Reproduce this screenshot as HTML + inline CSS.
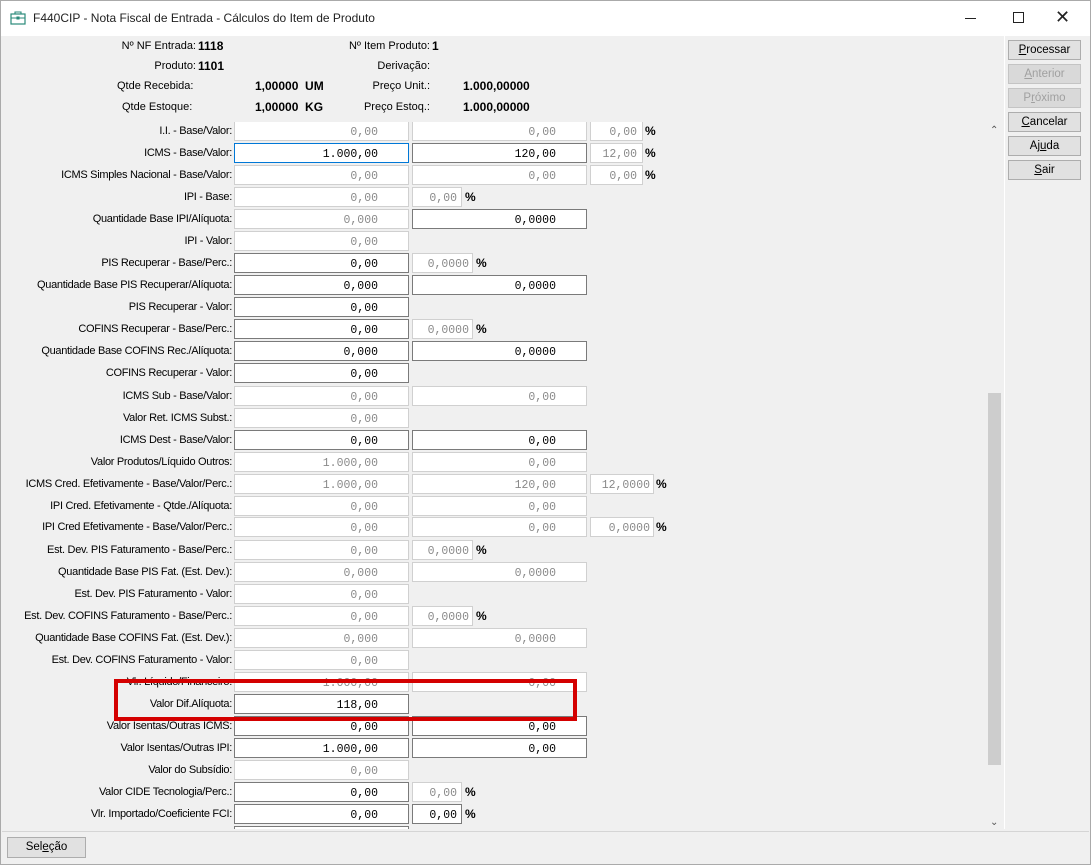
<!DOCTYPE html>
<html><head><meta charset="utf-8">
<style>
*{box-sizing:border-box;margin:0;padding:0}
body{width:1091px;height:865px;background:#f0f0f0;font-family:"Liberation Sans",sans-serif;font-size:11px;color:#000;position:relative;overflow:hidden}
.tb{position:absolute;left:0;top:0;width:1091px;height:36px;background:#fff;border:1px solid #aaa;border-bottom:none}
.tb .t{position:absolute;left:32px;top:10px;font-size:12px;color:#222}
.sc{position:absolute;left:0;top:122px;width:985px;height:707px;overflow:hidden}
.l{position:absolute;left:0;width:232px;height:20px;line-height:20px;text-align:right;white-space:nowrap;letter-spacing:-0.3px}
.f{position:absolute;height:20px;line-height:18px;padding-top:2px;text-align:right;padding-right:30px;font-family:"Liberation Mono",monospace;font-size:11.5px;background:#fff;border:1px solid #7a7a7a;color:#000;white-space:nowrap}
.d{border-color:#d0d0d0;color:#8a8a8a}
.b1{left:234px;width:175px}
.b2{left:412px;width:175px}
.b3{left:590px;width:53px;padding-right:5px}
.b4{left:590px;width:64px;padding-right:3px}
.s1{left:412px;width:50px;padding-right:4px}
.s2{left:412px;width:61px;padding-right:3px}
.p{position:absolute;height:20px;line-height:20px;font-weight:bold;font-size:12px}
.h{position:absolute;font-size:11px;white-space:nowrap}
.hb{position:absolute;font-size:12px;font-weight:bold;white-space:nowrap}
.btn{position:absolute;left:1008px;width:73px;height:20px;border:1px solid #adadad;background:#e1e1e1;text-align:center;line-height:18px;font-size:11.5px}
.btn.dis{color:#a0a0a0;background:#d9d9d9;border-color:#c4c4c4}
u{text-decoration:underline}
</style></head><body>
<div class="tb">
<svg style="position:absolute;left:9px;top:10px" width="16" height="14" viewBox="0 0 16 14"><rect x="1" y="3" width="14" height="10" fill="none" stroke="#2a8a7a" stroke-width="1.2"/><path d="M5 3V1h6v2M1 7h14M7 6h2v2H7z" fill="none" stroke="#2a8a7a" stroke-width="1.1"/></svg>
<div class="t">F440CIP - Nota Fiscal de Entrada - Cálculos do Item de Produto</div>
<div style="position:absolute;left:964px;top:17px;width:11px;height:1px;background:#222"></div>
<div style="position:absolute;left:1012px;top:11px;width:11px;height:11px;border:1px solid #222"></div>
<div style="position:absolute;left:1054px;top:6px;font-size:18px;color:#222">✕</div>
</div>
<div style="position:absolute;left:0;top:36px;width:1091px;height:829px;border:1px solid #aaa;border-top:none"></div>

<div class="h" style="right:895px;top:40px">Nº NF Entrada:</div><div class="hb" style="left:198px;top:39px">1118</div>
<div class="h" style="right:661px;top:40px">Nº Item Produto:</div><div class="hb" style="left:432px;top:39px">1</div>
<div class="h" style="right:895px;top:60px">Produto:</div><div class="hb" style="left:198px;top:59px">1101</div>
<div class="h" style="right:661px;top:60px">Derivação:</div>
<div class="h" style="left:117px;top:80px">Qtde Recebida:</div><div class="hb" style="left:255px;top:79px">1,00000&nbsp; UM</div>
<div class="h" style="right:661px;top:80px">Preço Unit.:</div><div class="hb" style="left:463px;top:79px">1.000,00000</div>
<div class="h" style="left:122px;top:101px">Qtde Estoque:</div><div class="hb" style="left:255px;top:100px">1,00000&nbsp; KG</div>
<div class="h" style="right:661px;top:101px">Preço Estoq.:</div><div class="hb" style="left:463px;top:100px">1.000,00000</div>

<div class="sc">
<div class="l" style="top:-1px">I.I. - Base/Valor:</div><div class="f d b1" style="top:-1px">0,00</div><div class="f d b2" style="top:-1px">0,00</div><div class="f d b3" style="top:-1px">0,00</div><div class="p" style="left:645px;top:-1px">%</div>
<div class="l" style="top:21px">ICMS - Base/Valor:</div><div class="f b1" style="top:21px;border-color:#0078d7">1.000,00</div><div class="f b2" style="top:21px">120,00</div><div class="f d b3" style="top:21px">12,00</div><div class="p" style="left:645px;top:21px">%</div>
<div class="l" style="top:43px">ICMS Simples Nacional - Base/Valor:</div><div class="f d b1" style="top:43px">0,00</div><div class="f d b2" style="top:43px">0,00</div><div class="f d b3" style="top:43px">0,00</div><div class="p" style="left:645px;top:43px">%</div>
<div class="l" style="top:65px">IPI - Base:</div><div class="f d b1" style="top:65px">0,00</div><div class="f d s1" style="top:65px">0,00</div><div class="p" style="left:465px;top:65px">%</div>
<div class="l" style="top:87px">Quantidade Base IPI/Alíquota:</div><div class="f d b1" style="top:87px">0,000</div><div class="f b2" style="top:87px">0,0000</div>
<div class="l" style="top:109px">IPI - Valor:</div><div class="f d b1" style="top:109px">0,00</div>
<div class="l" style="top:131px">PIS Recuperar - Base/Perc.:</div><div class="f b1" style="top:131px">0,00</div><div class="f d s2" style="top:131px">0,0000</div><div class="p" style="left:476px;top:131px">%</div>
<div class="l" style="top:153px">Quantidade Base PIS Recuperar/Alíquota:</div><div class="f b1" style="top:153px">0,000</div><div class="f b2" style="top:153px">0,0000</div>
<div class="l" style="top:175px">PIS Recuperar - Valor:</div><div class="f b1" style="top:175px">0,00</div>
<div class="l" style="top:197px">COFINS Recuperar - Base/Perc.:</div><div class="f b1" style="top:197px">0,00</div><div class="f d s2" style="top:197px">0,0000</div><div class="p" style="left:476px;top:197px">%</div>
<div class="l" style="top:219px">Quantidade Base COFINS Rec./Alíquota:</div><div class="f b1" style="top:219px">0,000</div><div class="f b2" style="top:219px">0,0000</div>
<div class="l" style="top:241px">COFINS Recuperar - Valor:</div><div class="f b1" style="top:241px">0,00</div>
<div class="l" style="top:264px">ICMS Sub - Base/Valor:</div><div class="f d b1" style="top:264px">0,00</div><div class="f d b2" style="top:264px">0,00</div>
<div class="l" style="top:286px">Valor Ret. ICMS Subst.:</div><div class="f d b1" style="top:286px">0,00</div>
<div class="l" style="top:308px">ICMS Dest - Base/Valor:</div><div class="f b1" style="top:308px">0,00</div><div class="f b2" style="top:308px">0,00</div>
<div class="l" style="top:330px">Valor Produtos/Líquido Outros:</div><div class="f d b1" style="top:330px">1.000,00</div><div class="f d b2" style="top:330px">0,00</div>
<div class="l" style="top:352px">ICMS Cred. Efetivamente - Base/Valor/Perc.:</div><div class="f d b1" style="top:352px">1.000,00</div><div class="f d b2" style="top:352px">120,00</div><div class="f d b4" style="top:352px">12,0000</div><div class="p" style="left:656px;top:352px">%</div>
<div class="l" style="top:374px">IPI Cred. Efetivamente - Qtde./Alíquota:</div><div class="f d b1" style="top:374px">0,00</div><div class="f d b2" style="top:374px">0,00</div>
<div class="l" style="top:395px">IPI Cred Efetivamente - Base/Valor/Perc.:</div><div class="f d b1" style="top:395px">0,00</div><div class="f d b2" style="top:395px">0,00</div><div class="f d b4" style="top:395px">0,0000</div><div class="p" style="left:656px;top:395px">%</div>
<div class="l" style="top:418px">Est. Dev. PIS Faturamento - Base/Perc.:</div><div class="f d b1" style="top:418px">0,00</div><div class="f d s2" style="top:418px">0,0000</div><div class="p" style="left:476px;top:418px">%</div>
<div class="l" style="top:440px">Quantidade Base PIS Fat. (Est. Dev.):</div><div class="f d b1" style="top:440px">0,000</div><div class="f d b2" style="top:440px">0,0000</div>
<div class="l" style="top:462px">Est. Dev. PIS Faturamento - Valor:</div><div class="f d b1" style="top:462px">0,00</div>
<div class="l" style="top:484px">Est. Dev. COFINS Faturamento - Base/Perc.:</div><div class="f d b1" style="top:484px">0,00</div><div class="f d s2" style="top:484px">0,0000</div><div class="p" style="left:476px;top:484px">%</div>
<div class="l" style="top:506px">Quantidade Base COFINS Fat. (Est. Dev.):</div><div class="f d b1" style="top:506px">0,000</div><div class="f d b2" style="top:506px">0,0000</div>
<div class="l" style="top:528px">Est. Dev. COFINS Faturamento - Valor:</div><div class="f d b1" style="top:528px">0,00</div>
<div class="l" style="top:550px">Vlr. Líquido/Financeiro:</div><div class="f d b1" style="top:550px">1.000,00</div><div class="f d b2" style="top:550px">0,00</div>
<div class="l" style="top:572px">Valor Dif.Alíquota:</div><div class="f b1" style="top:572px">118,00</div>
<div class="l" style="top:594px">Valor Isentas/Outras ICMS:</div><div class="f b1" style="top:594px">0,00</div><div class="f b2" style="top:594px">0,00</div>
<div class="l" style="top:616px">Valor Isentas/Outras IPI:</div><div class="f b1" style="top:616px">1.000,00</div><div class="f b2" style="top:616px">0,00</div>
<div class="l" style="top:638px">Valor do Subsídio:</div><div class="f d b1" style="top:638px">0,00</div>
<div class="l" style="top:660px">Valor CIDE Tecnologia/Perc.:</div><div class="f b1" style="top:660px">0,00</div><div class="f d s1" style="top:660px">0,00</div><div class="p" style="left:465px;top:660px">%</div>
<div class="l" style="top:682px">Vlr. Importado/Coeficiente FCI:</div><div class="f b1" style="top:682px">0,00</div><div class="f s1" style="top:682px">0,00</div><div class="p" style="left:465px;top:682px">%</div>
<div class="l" style="top:704px">Valor do ICMS Desonerado:</div><div class="f b1" style="top:704px">0,00</div>
</div>

<div style="position:absolute;left:114px;top:679px;width:463px;height:42px;border:4px solid #d40000"></div>

<div style="position:absolute;left:986px;top:124px;width:17px;height:706px;background:#f0f0f0"></div>
<div style="position:absolute;left:988px;top:393px;width:13px;height:372px;background:#cdcdcd"></div>
<div style="position:absolute;left:990px;top:125px;font-size:10px;color:#555">&#8963;</div>
<div style="position:absolute;left:990px;top:817px;font-size:10px;color:#555">&#8964;</div>
<div style="position:absolute;left:1004px;top:36px;width:1px;height:793px;background:#fff"></div>

<div class="btn" style="top:40px"><u>P</u>rocessar</div>
<div class="btn dis" style="top:64px"><u>A</u>nterior</div>
<div class="btn dis" style="top:88px">P<u>r</u>óximo</div>
<div class="btn" style="top:112px"><u>C</u>ancelar</div>
<div class="btn" style="top:136px">Aj<u>u</u>da</div>
<div class="btn" style="top:160px"><u>S</u>air</div>

<div style="position:absolute;left:2px;top:831px;width:1087px;height:1px;background:#d5d5d5"></div>
<div class="btn" style="left:7px;top:837px;width:79px;height:21px"><span style="line-height:19px">Sel<u>e</u>ção</span></div>
</body></html>
